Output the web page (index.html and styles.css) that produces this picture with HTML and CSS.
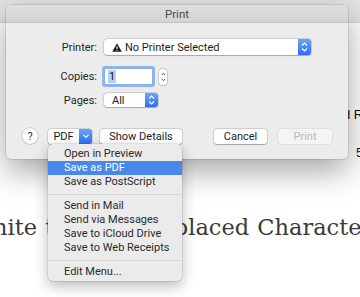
FILE: index.html
```html
<!DOCTYPE html>
<html lang="en">
  <head>
    <meta charset="UTF-8" />
    <meta name="viewport" content="width=device-width, initial-scale=1.0" />
    <title>Print</title>
    <link rel="stylesheet" href="styles.css">
  </head>
  <body>
    <div class="toolbar"></div>

    <!-- page behind the sheet -->
    <main class="doc">
      <div class="doc-side">
        <p class="side-line">d Rows</p>
        <p class="side-num">5</p>
      </div>
      <h1 class="doc-title">Unite text to a replaced Characters</h1>
    </main>

    <!-- print sheet ------------------------------------------------------->
    <div class="sheet">
      <div class="sheet-title">Print</div>
      <div class="sheet-body">
        <div class="field field-printer">
          <span class="field-label">Printer:</span>
          <div class="popup popup-wide">
            <span class="popup-text">
              <svg class="warn" width="10" height="9" viewBox="0 0 10 9">
                <path d="M5 0.3 L9.8 8.7 L0.2 8.7 Z" fill="#1e1e1e" />
                <path d="M5 3.2 V6" stroke="#fff" stroke-width="1.1" />
                <circle cx="5" cy="7.3" r="0.6" fill="#fff" />
              </svg>
              No Printer Selected
            </span>
            <span class="popup-arrows">
              <svg width="9" height="12" viewBox="0 0 9 12">
                <path d="M2 4.5 L4.5 2 L7 4.5 M2 7.5 L4.5 10 L7 7.5" fill="none" stroke="#fff" stroke-width="1.2" />
              </svg>
            </span>
          </div>
        </div>

        <div class="field field-copies">
          <span class="field-label">Copies:</span>
          <span class="text-input"><span class="text-sel">1</span></span>
          <span class="stepper">
            <svg width="7" height="14" viewBox="0 0 7 14">
              <path d="M1.8 5 L3.5 3.3 L5.2 5 M1.8 9 L3.5 10.7 L5.2 9" fill="none" stroke="#333" stroke-width="0.9" />
            </svg>
          </span>
        </div>

        <div class="field field-pages">
          <span class="field-label">Pages:</span>
          <div class="popup popup-small">
            <span class="popup-text">All</span>
            <span class="popup-arrows">
              <svg width="9" height="12" viewBox="0 0 9 12">
                <path d="M2 4.5 L4.5 2 L7 4.5 M2 7.5 L4.5 10 L7 7.5" fill="none" stroke="#fff" stroke-width="1.2" />
              </svg>
            </span>
          </div>
        </div>

        <div class="actions">
          <span class="help">?</span>
          <div class="pdf-btn">
            <span class="pdf-text">PDF</span>
            <span class="pdf-arrow">
              <svg width="8" height="6" viewBox="0 0 8 6">
                <path d="M1.5 1.8 L4 4.3 L6.5 1.8" fill="none" stroke="#fff" stroke-width="1.2" />
              </svg>
            </span>
          </div>
          <button class="btn btn-details">Show Details</button>
          <button class="btn btn-cancel">Cancel</button>
          <button class="btn btn-print" disabled>Print</button>
        </div>
      </div>
    </div>

    <!-- PDF menu ---------------------------------------------------------->
    <ul class="menu">
      <li class="menu-item">Open in Preview</li>
      <li class="menu-item is-active">Save as PDF</li>
      <li class="menu-item">Save as PostScript</li>
      <li class="menu-sep"></li>
      <li class="menu-item">Send in Mail</li>
      <li class="menu-item">Send via Messages</li>
      <li class="menu-item">Save to iCloud Drive</li>
      <li class="menu-item">Save to Web Receipts</li>
      <li class="menu-sep"></li>
      <li class="menu-item">Edit Menu...</li>
    </ul>
  </body>
</html>
```

FILE: styles.css
```css
html,
body {
  margin: 0;
  overflow: hidden;
  height: 100%;
}
body {
  font-family: "Roboto", "Liberation Sans", arial, sans-serif;
  font-size: 11px;
  color: #222;
  background: #fff;
}
.toolbar {
  height: 22px;
  background: #e3e3e3;
  border-bottom: 1px solid #d2d2d2;
}

/* document behind the sheet */
.doc {
  padding-top: 84px;
  white-space: nowrap;
}
.doc-side p {
  margin: 0;
  font-family: "Liberation Sans", arial, sans-serif;
  font-size: 13px;
  line-height: 15px;
  color: #111;
}
.side-line {
  padding-left: 343px;
}
.side-num {
  padding-left: 356px;
  margin-top: 23px !important;
}
.doc-title {
  margin: 52px 0 0;
  font-family: "DejaVu Serif", "Liberation Serif", serif;
  font-weight: 400;
  font-size: 22.5px;
  line-height: 30px;
  color: #3a3a3a;
  text-indent: -26px;
  word-spacing: 1px;
}

/* sheet */
.sheet {
  position: absolute;
  left: 6px;
  top: 5px;
  width: 342px;
  height: 154px;
  background: #ececec;
  border-radius: 5px;
  box-shadow: 0 0 0 0.5px rgba(0, 0, 0, 0.18), 0 12px 32px rgba(0, 0, 0, 0.36);
  overflow: hidden;
}
.sheet-title {
  height: 17px;
  line-height: 19px;
  text-align: center;
  font-size: 11.5px;
  color: #4a4a4a;
  background: linear-gradient(#dedede, #d3d3d3);
  border-bottom: 1px solid #c3c3c3;
}
.sheet-body {
  padding: 16px 16px 0 6px;
}
.field {
  display: flex;
  align-items: center;
}
.field-label {
  width: 85px;
  margin-right: 7px;
  text-align: right;
  color: #262626;
}
.field-printer {
  height: 16px;
}
.field-copies {
  height: 15px;
  margin-top: 14px;
}
.field-pages {
  height: 14px;
  margin-top: 9px;
}

.popup {
  display: flex;
  height: 100%;
  background: #fff;
  border-radius: 3px;
  box-shadow: 0 0 0 0.5px rgba(0, 0, 0, 0.22), 0 0.5px 1px rgba(0, 0, 0, 0.2);
}
.popup-wide {
  width: 207px;
}
.popup-small {
  width: 54px;
}
.popup-text {
  flex: 1;
  display: flex;
  align-items: center;
  gap: 3px;
  padding-left: 8px;
  color: #1c1c1c;
}
.popup-arrows {
  width: 13px;
  display: flex;
  align-items: center;
  justify-content: center;
  border-radius: 0 3px 3px 0;
  background: linear-gradient(#68a4fa, #2e70ea);
}

.text-input {
  width: 44px;
  height: 15px;
  margin-left: 1px;
  padding-left: 3px;
  display: flex;
  align-items: center;
  background: #fff;
  box-shadow: 0 0 0 0.5px #8aa9d8, 0 0 0 3px #8db5f0;
  border-radius: 1px;
}
.text-sel {
  background: #b5d1f8;
  padding: 0 1px;
  line-height: 13px;
  color: #111;
}
.stepper {
  width: 8px;
  height: 16px;
  margin-left: 7px;
  display: flex;
  align-items: center;
  justify-content: center;
  background: #fff;
  border-radius: 3px;
  box-shadow: 0 0 0 0.5px rgba(0, 0, 0, 0.25), 0 0.5px 1px rgba(0, 0, 0, 0.15);
}

/* bottom buttons */
.actions {
  display: flex;
  align-items: center;
  height: 16px;
  margin-top: 21px;
  padding-left: 10px;
}
.help {
  width: 16px;
  height: 16px;
  border-radius: 50%;
  background: #fff;
  box-shadow: 0 0 0 0.5px rgba(0, 0, 0, 0.22), 0 0.5px 1px rgba(0, 0, 0, 0.2);
  display: flex;
  align-items: center;
  justify-content: center;
  font-size: 11px;
  color: #333;
}
.pdf-btn {
  display: flex;
  width: 44px;
  height: 15px;
  margin-left: 10px;
  background: #fff;
  border-radius: 3px;
  box-shadow: 0 0 0 0.5px rgba(0, 0, 0, 0.22), 0 0.5px 1px rgba(0, 0, 0, 0.2);
}
.pdf-text {
  flex: 1;
  text-align: center;
  line-height: 15px;
  color: #1c1c1c;
}
.pdf-arrow {
  width: 13px;
  display: flex;
  align-items: center;
  justify-content: center;
  border-radius: 0 3px 3px 0;
  background: linear-gradient(#68a4fa, #2e70ea);
}
.btn {
  height: 15px;
  padding: 0;
  border: none;
  border-radius: 3px;
  background: #fff;
  font: inherit;
  color: #1c1c1c;
  box-shadow: 0 0 0 0.5px rgba(0, 0, 0, 0.22), 0 0.5px 1px rgba(0, 0, 0, 0.2);
}
.btn-details {
  width: 82px;
  margin-left: 8px;
}
.btn-cancel {
  width: 53px;
  margin-left: auto;
}
.btn-print {
  width: 54px;
  margin-left: 11px;
  background: #f4f4f4;
  color: #b8b8b8;
  box-shadow: 0 0 0 0.5px rgba(0, 0, 0, 0.1);
}

/* dropdown menu */
.menu {
  position: absolute;
  left: 48px;
  top: 144px;
  width: 134px;
  margin: 0;
  padding: 3px 0 2px;
  list-style: none;
  background: #ebebeb;
  border-radius: 5px;
  box-shadow: 0 0 0 0.5px rgba(0, 0, 0, 0.15), 0 5px 14px rgba(0, 0, 0, 0.28);
}
.menu-item {
  height: 14px;
  line-height: 14px;
  padding-left: 16px;
  color: #2a2a2a;
}
.menu-item.is-active {
  background: #4a87ea;
  color: #fff;
}
.menu-sep {
  height: 1px;
  margin: 5px 0 4px;
  background: #d6d6d6;
}
```
